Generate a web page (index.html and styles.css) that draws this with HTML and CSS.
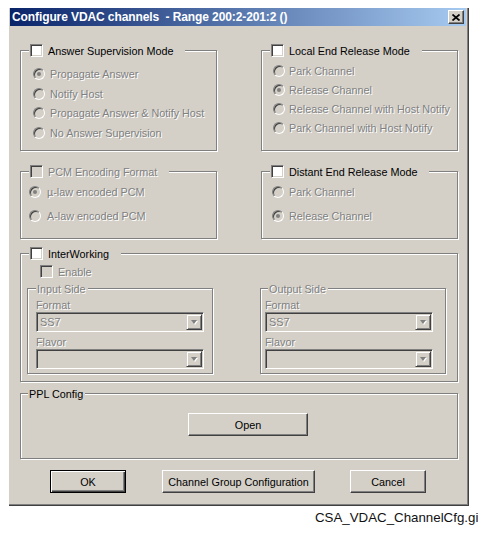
FILE: index.html
```html
<!DOCTYPE html>
<html>
<head>
<meta charset="utf-8">
<link rel="stylesheet" href="styles.css">
</head>
<body>
<div class="dialog">
  <div class="titlebar">
    <span class="title">Configure VDAC channels  - Range 200:2-201:2 ()</span>
    <span class="close"><svg width="8" height="7" viewBox="0 0 8 7"><path d="M0.5 0.5 L7.5 6.5 M7.5 0.5 L0.5 6.5" stroke="#000" stroke-width="1.7" fill="none"/></svg></span>
  </div>
  <div class="content">
    <div class="row row1">
      <div class="group g-answer">
        <div class="legend"><span class="cb"></span><span>Answer Supervision Mode</span></div>
        <div class="opts">
          <div class="opt"><span class="rb on"></span><span class="dt">Propagate Answer</span></div>
          <div class="opt"><span class="rb"></span><span class="dt">Notify Host</span></div>
          <div class="opt"><span class="rb"></span><span class="dt">Propagate Answer &amp; Notify Host</span></div>
          <div class="opt"><span class="rb"></span><span class="dt">No Answer Supervision</span></div>
        </div>
      </div>
      <div class="group g-local">
        <div class="legend"><span class="cb"></span><span>Local End Release Mode</span></div>
        <div class="opts">
          <div class="opt"><span class="rb"></span><span class="dt">Park Channel</span></div>
          <div class="opt"><span class="rb on"></span><span class="dt">Release Channel</span></div>
          <div class="opt"><span class="rb"></span><span class="dt">Release Channel with Host Notify</span></div>
          <div class="opt"><span class="rb"></span><span class="dt">Park Channel with Host Notify</span></div>
        </div>
      </div>
    </div>
    <div class="row row2">
      <div class="group g-pcm">
        <div class="legend"><span class="cb off"></span><span class="dt">PCM Encoding Format</span></div>
        <div class="opts">
          <div class="opt"><span class="rb on"></span><span class="dt">µ-law encoded PCM</span></div>
          <div class="opt"><span class="rb"></span><span class="dt">A-law encoded PCM</span></div>
        </div>
      </div>
      <div class="group g-distant">
        <div class="legend"><span class="cb"></span><span>Distant End Release Mode</span></div>
        <div class="opts">
          <div class="opt"><span class="rb"></span><span class="dt">Park Channel</span></div>
          <div class="opt"><span class="rb on"></span><span class="dt">Release Channel</span></div>
        </div>
      </div>
    </div>
    <div class="group g-inter">
      <div class="legend"><span class="cb"></span><span>InterWorking</span></div>
      <div class="enable"><span class="cb off"></span><span class="dt">Enable</span></div>
      <div class="sides">
        <div class="group side side-in">
          <div class="legend legend-t"><span class="dt">Input Side</span></div>
          <div class="flabel dt">Format</div>
          <div class="combo"><span class="cval dt">SS7</span><span class="cbtn"><span class="arrow"></span></span></div>
          <div class="flabel dt">Flavor</div>
          <div class="combo"><span class="cval dt"></span><span class="cbtn"><span class="arrow"></span></span></div>
        </div>
        <div class="group side side-out">
          <div class="legend legend-t"><span class="dt">Output Side</span></div>
          <div class="flabel dt">Format</div>
          <div class="combo"><span class="cval dt">SS7</span><span class="cbtn"><span class="arrow"></span></span></div>
          <div class="flabel dt">Flavor</div>
          <div class="combo"><span class="cval dt"></span><span class="cbtn"><span class="arrow"></span></span></div>
        </div>
      </div>
    </div>
    <div class="group g-ppl">
      <div class="legend legend-t"><span>PPL Config</span></div>
      <div class="btn open">Open</div>
    </div>
    <div class="buttons">
      <div class="btn default ok">OK</div>
      <div class="btn cgc">Channel Group Configuration</div>
      <div class="btn cancel">Cancel</div>
    </div>
  </div>
</div>
<div class="caption">CSA_VDAC_ChannelCfg.gi</div>
</body>
</html>
```
FILE: styles.css
```css
html, body {
  margin: 0;
  padding: 0;
  background: #fff;
  overflow: hidden;
}
body {
  width: 479px;
  height: 537px;
  font-family: "Liberation Sans", Arial, sans-serif;
  font-size: 10.8px;
  color: #000;
}
.dialog {
  margin: 8px 0 0 9px;
  width: 460px;
  height: 498px;
  box-sizing: border-box;
  background: #d4d0c8;
  border-right: 1px solid #404040;
  border-bottom: 1px solid #404040;
  box-shadow: inset -1px -1px 0 #808080;
  padding: 0 2px 2px 1px;
  display: flex;
  flex-direction: column;
}
.titlebar {
  height: 18px;
  display: flex;
  align-items: center;
  justify-content: space-between;
  background: linear-gradient(to right, #0a246a, #a6caf0);
  padding: 0 2px;
}
.title {
  color: #fff;
  font-weight: bold;
  font-size: 12px;
  letter-spacing: -0.1px;
  white-space: pre;
}
.close {
  width: 16px;
  height: 14px;
  box-sizing: border-box;
  background: #d4d0c8;
  border: 1px solid;
  border-color: #fff #404040 #404040 #fff;
  box-shadow: inset -1px -1px 0 #808080;
  display: flex;
  align-items: center;
  justify-content: center;
}
.close svg { display: block; }
.content {
  padding: 24px 8px 0 10px;
  display: flex;
  flex-direction: column;
}
.row {
  display: grid;
  grid-template-columns: 197px 197px;
  column-gap: 44px;
}
.row1 { height: 101px; }
.row2 { height: 68px; margin-top: 20px; }
.group {
  box-sizing: border-box;
  border: 1px solid #808080;
  box-shadow: 1px 1px 0 #fff, inset 1px 1px 0 #fff;
}
.legend {
  display: flex;
  align-items: center;
  gap: 5px;
  height: 13px;
  margin: -7px 0 0 8px;
  padding: 0 12px 0 1px;
  background: #d4d0c8;
  width: max-content;
}
.legend-t {
  padding: 0 2px 0 1px;
}
.cb {
  width: 13px;
  height: 13px;
  box-sizing: border-box;
  background: #fff;
  border: 1px solid;
  border-color: #808080 #fff #fff #808080;
  box-shadow: inset 1px 1px 0 #404040, inset -1px -1px 0 #d4d0c8;
}
.cb.off { background: #d4d0c8; }
.rb {
  width: 12px;
  height: 12px;
  box-sizing: border-box;
  border-radius: 50%;
  border: 1px solid;
  border-color: #808080 #fff #fff #808080;
  box-shadow: inset 1px 1px 0 #404040, inset -1px -1px 0 #d4d0c8;
  background: #d4d0c8;
  display: flex;
  align-items: center;
  justify-content: center;
  flex: none;
}
.rb.on::after {
  content: "";
  width: 4px;
  height: 4px;
  border-radius: 50%;
  background: #808080;
}
.dt {
  color: #808080;
  text-shadow: 1px 1px 0 #fff;
}
.opts {
  display: flex;
  flex-direction: column;
}
.opt {
  display: flex;
  align-items: center;
  gap: 5px;
  white-space: nowrap;
}
.g-answer .opts { padding: 7px 0 0 12px; }
.g-answer .opt { height: 19.7px; }
.g-local .opts { padding: 4.5px 0 0 11px; }
.g-local .opt { height: 19px; gap: 4px; }
.g-pcm .opts { padding: 2px 0 0 8px; }
.g-pcm .opt { height: 24px; gap: 6px; }
.g-distant .opts { padding: 2px 0 0 10px; }
.g-distant .opt { height: 24px; }

.g-inter {
  margin-top: 14px;
  height: 129px;
}
.enable {
  display: flex;
  align-items: center;
  gap: 5px;
  height: 13px;
  margin: 5px 0 0 19px;
}
.sides {
  display: grid;
  grid-template-columns: 186px 186px;
  column-gap: 47px;
  margin: 10px 0 0 6px;
}
.side {
  height: 86px;
  display: flex;
  flex-direction: column;
}
.side-in { padding-left: 8px; }
.side-out { padding-left: 4px; }
.side .legend { margin-left: 8px; }
.side-in .legend { margin-left: 0; }
.side-out .legend { margin-left: 3px; }
.flabel {
  height: 12px;
  line-height: 12px;
  margin-top: 4px;
}
.combo {
  width: 168px;
  height: 20px;
  box-sizing: border-box;
  margin-top: 1px;
  border: 1px solid;
  border-color: #808080 #fff #fff #808080;
  box-shadow: inset 1px 1px 0 #404040, inset -1px -1px 0 #d4d0c8;
  background: #d4d0c8;
  display: flex;
  align-items: center;
  padding: 1px;
}
.cval {
  flex: 1;
  padding-left: 2px;
}
.cbtn {
  width: 16px;
  height: 16px;
  box-sizing: border-box;
  border: 1px solid;
  border-color: #d4d0c8 #404040 #404040 #d4d0c8;
  box-shadow: inset 1px 1px 0 #fff, inset -1px -1px 0 #808080;
  display: flex;
  align-items: center;
  justify-content: center;
}
.arrow {
  width: 0;
  height: 0;
  border-left: 3.5px solid transparent;
  border-right: 3.5px solid transparent;
  border-top: 4px solid #808080;
  filter: drop-shadow(1px 1px 0 #fff);
}
.g-ppl {
  margin-top: 11px;
  height: 66px;
}
.g-ppl .legend { margin-left: 7px; }
.btn {
  box-sizing: border-box;
  height: 23px;
  background: #d4d0c8;
  border: 1px solid;
  border-color: #fff #404040 #404040 #fff;
  box-shadow: inset -1px -1px 0 #808080;
  display: flex;
  align-items: center;
  justify-content: center;
  white-space: nowrap;
}
.btn.default {
  border: 1px solid #000;
  box-shadow: inset 1px 1px 0 #fff, inset -1px -1px 0 #404040, inset -2px -2px 0 #808080;
}
.open {
  width: 120px;
  margin: 13px 0 0 167px;
}
.buttons {
  display: flex;
  margin-top: 11px;
}
.ok { width: 76px; margin-left: 30px; }
.cgc { width: 153px; margin-left: 36px; }
.cancel { width: 76px; margin-left: 35px; }
.caption {
  margin: 4px 0 0 315px;
  font-size: 13.3px;
  white-space: nowrap;
  color: #111;
}
```
